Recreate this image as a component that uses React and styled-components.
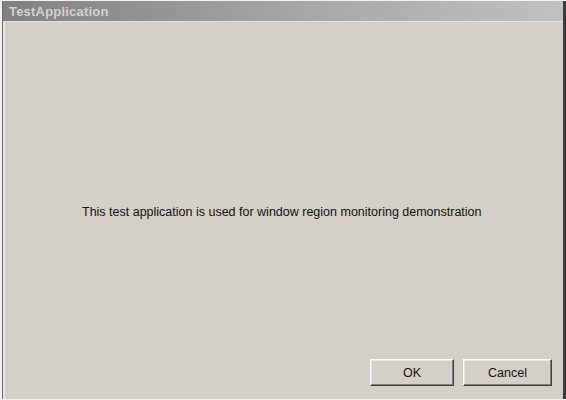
import styled, { createGlobalStyle } from "styled-components";

const Global = createGlobalStyle`
  html, body { margin: 0; padding: 0; background: #ffffff; }
  #root { width: 566px; height: 400px; }
`;

const Frame = styled.div`
  box-sizing: border-box;
  width: 566px;
  height: 400px;
  padding: 1px 0 1px 2px;
  background: #f2f2f2;
  display: flex;
`;

const Window = styled.div`
  box-sizing: border-box;
  flex: 1;
  display: flex;
  flex-direction: column;
  background: #d4d0c8;
  border-left: 1px solid #6a6a6a;
  border-right: 3px solid #3c3c3c;
  font-family: "Liberation Sans", Arial, sans-serif;
`;

const TitleBar = styled.div`
  height: 20px;
  display: flex;
  align-items: center;
  padding-left: 6px;
  background: linear-gradient(to right, #808080 0%, #a8a8a8 55%, #c0c0c0 100%);
  border-bottom: 1px solid #e4e2dc;
  color: #d2d2d2;
  font-weight: bold;
  font-size: 13px;
  letter-spacing: 0.2px;
`;

const Body = styled.div`
  flex: 1;
  display: flex;
  flex-direction: column;
  border-left: 2px solid #e8e6e0;
`;

const Message = styled.div`
  flex: 1;
  display: flex;
  align-items: center;
  padding-left: 77px;
  padding-top: 42px;
  font-size: 12.5px;
  color: #111111;
`;

const Footer = styled.div`
  display: flex;
  justify-content: flex-end;
  gap: 9px;
  padding: 0 11px 13px 0;
`;

const Button = styled.button`
  box-sizing: border-box;
  width: ${(p) => p.$w}px;
  height: 27px;
  background: #d4d0c8;
  border: 1px solid;
  border-color: #ffffff #404040 #404040 #ffffff;
  box-shadow: inset -1px -1px 0 #808080, inset 1px 1px 0 #e8e6e0;
  font-family: "Liberation Sans", Arial, sans-serif;
  font-size: 12.5px;
  color: #111111;
  padding: 0;
`;

export default function App() {
  return (
    <>
      <Global />
      <Frame>
        <Window>
          <TitleBar>TestApplication</TitleBar>
          <Body>
            <Message>
              This test application is used for window region monitoring demonstration
            </Message>
            <Footer>
              <Button $w={84}>OK</Button>
              <Button $w={89}>Cancel</Button>
            </Footer>
          </Body>
        </Window>
      </Frame>
    </>
  );
}
